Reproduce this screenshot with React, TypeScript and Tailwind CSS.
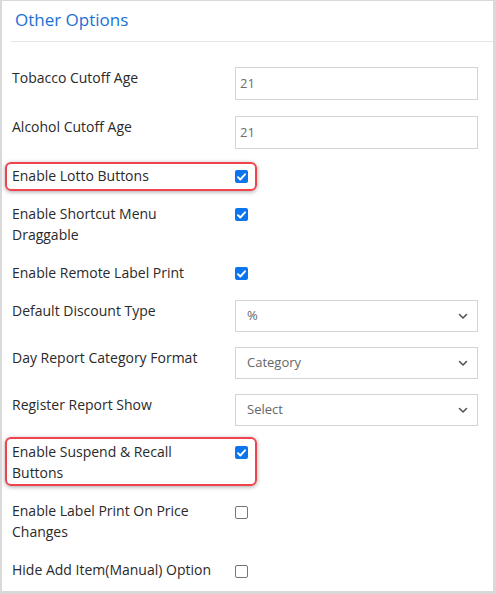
import type { ReactNode } from "react";

type Row =
  | { kind: "input"; label: string; value: string }
  | { kind: "select"; label: string; value: string }
  | { kind: "check"; label: string; checked: boolean; highlight?: "one" | "two" };

const rows: Row[] = [
  { kind: "input", label: "Tobacco Cutoff Age", value: "21" },
  { kind: "input", label: "Alcohol Cutoff Age", value: "21" },
  { kind: "check", label: "Enable Lotto Buttons", checked: true, highlight: "one" },
  { kind: "check", label: "Enable Shortcut Menu Draggable", checked: true },
  { kind: "check", label: "Enable Remote Label Print", checked: true },
  { kind: "select", label: "Default Discount Type", value: "%" },
  { kind: "select", label: "Day Report Category Format", value: "Category" },
  { kind: "select", label: "Register Report Show", value: "Select" },
  { kind: "check", label: "Enable Suspend & Recall Buttons", checked: true, highlight: "two" },
  { kind: "check", label: "Enable Label Print On Price Changes", checked: false },
  { kind: "check", label: "Hide Add Item(Manual) Option", checked: false },
];

function Chevron() {
  return (
    <svg width="10" height="7" viewBox="0 0 10 7" fill="none">
      <path d="M1.5 1.5L5 5l3.5-3.5" stroke="#555" strokeWidth="1.6" strokeLinecap="round" strokeLinejoin="round" />
    </svg>
  );
}

function Checkbox({ checked }: { checked: boolean }) {
  if (checked) {
    return (
      <span className="mt-[5px] flex h-[13px] w-[13px] items-center justify-center rounded-[2px] bg-[#0b75f0]">
        <svg width="9" height="8" viewBox="0 0 9 8" fill="none">
          <path d="M1 4.2l2.3 2.3L8 1.3" stroke="#fff" strokeWidth="1.9" strokeLinecap="round" strokeLinejoin="round" />
        </svg>
      </span>
    );
  }
  return <span className="mt-[6px] block h-[13px] w-[13px] rounded-[2px] border border-[#767676] bg-white" />;
}

function Label({ children }: { children: ReactNode }) {
  return (
    <div className="w-[233px] shrink-0 pl-[10px] pr-[24px] text-[14px] leading-[21px] text-[#2a2a2a]">
      {children}
    </div>
  );
}

function FormRow({ row }: { row: Row }) {
  if (row.kind === "input") {
    return (
      <div className="mb-4 flex items-start">
        <Label>{row.label}</Label>
        <div className="flex h-[33px] w-[243px] items-center border border-[#d4d4d4] bg-white pl-[4px] text-[13px] text-[#6e6e6e]">
          {row.value}
        </div>
      </div>
    );
  }
  if (row.kind === "select") {
    return (
      <div className="mb-[15px] flex items-start">
        <Label>{row.label}</Label>
        <div className="flex h-[32px] w-[243px] items-center justify-between border border-[#d4d4d4] bg-white pl-[11px] pr-[9px] text-[13px] text-[#666]">
          <span>{row.value}</span>
          <Chevron />
        </div>
      </div>
    );
  }
  return (
    <div className="relative mb-[17px] flex items-start">
      {row.highlight === "one" && (
        <div className="pointer-events-none absolute left-[3px] top-[-3px] bottom-[-5px] w-[252px] rounded-[6px] border-2 border-[#f0434d] shadow-[0_1px_4px_rgba(0,0,0,0.35)]" />
      )}
      {row.highlight === "two" && (
        <div className="pointer-events-none absolute left-[3px] top-[-4px] bottom-[-3px] w-[252px] rounded-[6px] border-2 border-[#f0434d] shadow-[0_1px_4px_rgba(0,0,0,0.35)]" />
      )}
      <Label>{row.label}</Label>
      <Checkbox checked={row.checked} />
    </div>
  );
}

export default function App() {
  return (
    <div className="h-[594px] w-[496px] overflow-hidden border-l-2 border-t border-r-[3px] border-b-[3px] border-[#d9d9d9] bg-white font-['Open_Sans',sans-serif]">
      <div className="ml-[9px] border-b border-[#e6e6e6] pl-[4px] pt-[7px] pb-[9px] text-[17px] leading-[24px] text-[#1b70d4]">
        Other Options
      </div>
      <div className="pt-[25px]">
        {rows.map((row) => (
          <FormRow key={row.label} row={row} />
        ))}
      </div>
    </div>
  );
}
